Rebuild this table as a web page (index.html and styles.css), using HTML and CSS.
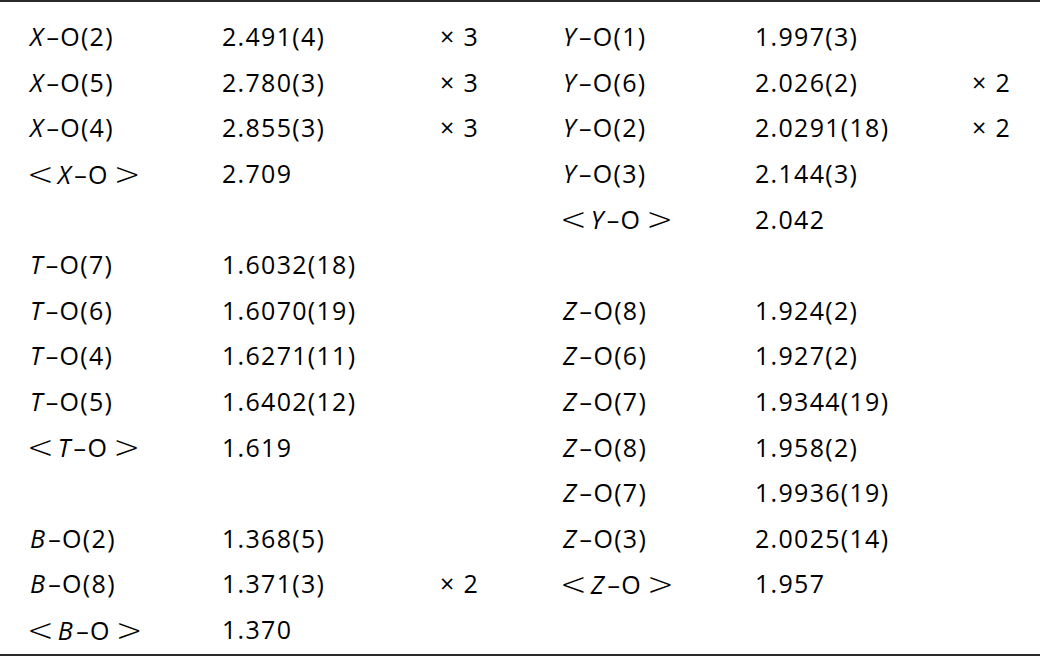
FILE: index.html
```html
<!DOCTYPE html>
<html>
<head>
<meta charset="utf-8">
<link rel="stylesheet" href="styles.css">
</head>
<body>
<div class="frame">
<table class="bonds">
<colgroup>
<col class="c1"><col class="c2"><col class="c3"><col class="c4"><col class="c5"><col class="c6">
</colgroup>
<tbody>
<tr><td><i>X</i>–O(2)</td><td>2.491(4)</td><td>× 3</td><td><i>Y</i>–O(1)</td><td>1.997(3)</td><td></td></tr>
<tr><td><i>X</i>–O(5)</td><td>2.780(3)</td><td>× 3</td><td><i>Y</i>–O(6)</td><td>2.026(2)</td><td>× 2</td></tr>
<tr><td><i>X</i>–O(4)</td><td>2.855(3)</td><td>× 3</td><td><i>Y</i>–O(2)</td><td>2.0291(18)</td><td>× 2</td></tr>
<tr><td><span class="lt">&lt;</span><i>X</i>–O<span class="gt">&gt;</span></td><td>2.709</td><td></td><td><i>Y</i>–O(3)</td><td>2.144(3)</td><td></td></tr>
<tr><td></td><td></td><td></td><td><span class="lt">&lt;</span><i>Y</i>–O<span class="gt">&gt;</span></td><td>2.042</td><td></td></tr>
<tr><td><i>T</i>–O(7)</td><td>1.6032(18)</td><td></td><td></td><td></td><td></td></tr>
<tr><td><i>T</i>–O(6)</td><td>1.6070(19)</td><td></td><td><i>Z</i>–O(8)</td><td>1.924(2)</td><td></td></tr>
<tr><td><i>T</i>–O(4)</td><td>1.6271(11)</td><td></td><td><i>Z</i>–O(6)</td><td>1.927(2)</td><td></td></tr>
<tr><td><i>T</i>–O(5)</td><td>1.6402(12)</td><td></td><td><i>Z</i>–O(7)</td><td>1.9344(19)</td><td></td></tr>
<tr><td><span class="lt">&lt;</span><i>T</i>–O<span class="gt">&gt;</span></td><td>1.619</td><td></td><td><i>Z</i>–O(8)</td><td>1.958(2)</td><td></td></tr>
<tr><td></td><td></td><td></td><td><i>Z</i>–O(7)</td><td>1.9936(19)</td><td></td></tr>
<tr><td><i>B</i>–O(2)</td><td>1.368(5)</td><td></td><td><i>Z</i>–O(3)</td><td>2.0025(14)</td><td></td></tr>
<tr><td><i>B</i>–O(8)</td><td>1.371(3)</td><td>× 2</td><td><span class="lt">&lt;</span><i>Z</i>–O<span class="gt">&gt;</span></td><td>1.957</td><td></td></tr>
<tr><td><span class="lt">&lt;</span><i>B</i>–O<span class="gt">&gt;</span></td><td>1.370</td><td></td><td></td><td></td><td></td></tr>
</tbody>
</table>
</div>
</body>
</html>
```

FILE: styles.css
```css
html, body {
  margin: 0;
  padding: 0;
  background: #fff;
}
.frame {
  width: 1040px;
  height: 656px;
  box-sizing: border-box;
  border-top: 2px solid #2a2a2a;
  border-bottom: 2px solid #2a2a2a;
  padding-top: 12px;
}
.bonds {
  width: 1040px;
  border-collapse: collapse;
  table-layout: fixed;
  font-family: "Open Sans", "Noto Sans", sans-serif;
  font-size: 25px;
  letter-spacing: 1.3px;
  color: #000;
}
.c1 { width: 222px; }
.c2 { width: 218px; }
.c3 { width: 123px; }
.c4 { width: 192px; }
.c5 { width: 217px; }
.c6 { width: 68px; }
.bonds td {
  height: 45.6px;
  padding: 0;
  white-space: nowrap;
  vertical-align: middle;
  line-height: 1;
}
.bonds td:first-child {
  padding-left: 30px;
}
.bonds i {
  font-style: italic;
  margin-right: 2px;
}
.lt, .gt {
  font-family: "DejaVu Sans", sans-serif;
  font-weight: 200;
  font-size: 32px;
  letter-spacing: 0;
  line-height: 1;
  vertical-align: -1px;
}
.lt { margin-left: -3px; margin-right: 4px; }
.gt { margin-left: 5px; }
```
